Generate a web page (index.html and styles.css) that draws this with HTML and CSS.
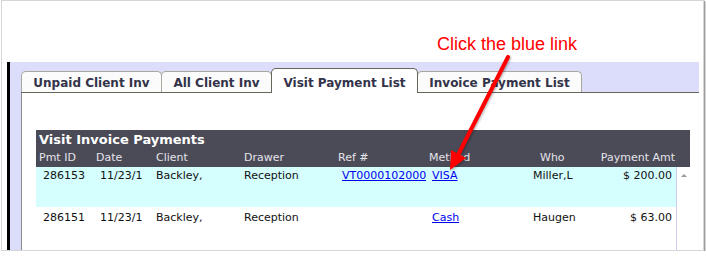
FILE: index.html
```html
<!DOCTYPE html>
<html lang="en">
<head>
  <meta charset="UTF-8">
  <title>Visit Payment List</title>
  <link rel="stylesheet" href="styles.css">
</head>
<body>

  <div class="shot">
    <div class="note">Click the blue link</div>

    <div class="app">
      <div class="gap"></div>
      <div class="bar"></div>
      <div class="panel">
        <div class="tabs">
          <div class="tab t1">Unpaid Client Inv</div>
          <div class="tab t2">All Client Inv</div>
          <div class="tab t3 active">Visit Payment List</div>
          <div class="tab t4">Invoice Payment List</div>
        </div>

        <div class="content">
          <div class="grid">
            <div class="head">
              <div class="title">Visit Invoice Payments</div>
              <div class="cols">
                <div>Pmt ID</div>
                <div>Date</div>
                <div>Client</div>
                <div>Drawer</div>
                <div>Ref #</div>
                <div>Method</div>
                <div class="who">Who</div>
                <div class="amt">Payment Amt</div>
                <div></div>
              </div>
            </div>

            <div class="row sel">
              <div class="c-id">286153</div>
              <div class="c-date">11/23/1</div>
              <div class="c-client">Backley,</div>
              <div class="c-drawer">Reception</div>
              <div class="c-ref"><a href="#">VT0000102000</a></div>
              <div class="c-method"><a href="#">VISA</a></div>
              <div class="c-who">Miller,L</div>
              <div class="c-amt">$ 200.00</div>
              <div class="scroll"><span class="up"></span></div>
            </div>

            <div class="row last">
              <div class="c-id">286151</div>
              <div class="c-date">11/23/1</div>
              <div class="c-client">Backley,</div>
              <div class="c-drawer">Reception</div>
              <div class="c-ref"></div>
              <div class="c-method"><a href="#">Cash</a></div>
              <div class="c-who">Haugen</div>
              <div class="c-amt">$ 63.00</div>
              <div class="scroll"></div>
            </div>
          </div>
        </div>
      </div>
    </div>

    <!-- annotation arrow, drawn over the page -->
    <svg class="arrow" width="706" height="258" viewBox="0 0 706 258">
      <line x1="508" y1="57" x2="458" y2="155" stroke="#f00" stroke-width="4" stroke-linecap="round"/>
      <polygon points="450,170 451,150 466,158" fill="#f00"/>
    </svg>
  </div>

</body>
</html>
```

FILE: styles.css
```css
body {
  margin: 0;
  padding-left: 1px;
  background-color: #fff;
}

.shot {
  position: relative;
  width: 701px;
  height: 249px;
  border: 1px solid #d6d6d6;
  box-shadow: 1px 1px 1px #9c9c9c, 2px 2px 2px #d4d4d4;
  background-color: #fff;
}

.note {
  height: 61px;
  box-sizing: border-box;
  padding: 33px 0 0 435px;
  font-family: "Liberation Sans", Arial, sans-serif;
  font-size: 18px;
  line-height: 20px;
  color: #f00;
}

.app {
  display: flex;
  height: 188px;
}

.gap {
  width: 5px;
}

.bar {
  width: 3px;
  background-color: #000;
}

.panel {
  width: 689px;
  display: flex;
  flex-direction: column;
  background-color: #dcdcfb;
  padding: 6px 0 0 11px;
  box-sizing: border-box;
  font-family: "DejaVu Sans", Verdana, sans-serif;
}

.tabs {
  display: flex;
  align-items: flex-end;
  height: 24px;
  border-bottom: 1px solid #66665a;
}

.tab {
  box-sizing: border-box;
  margin-right: -1px;
  padding-top: 2px;
  border: 1px solid #a8a89c;
  border-bottom: none;
  border-radius: 5px 5px 0 0;
  background-color: #fbfbfb;
  color: #33334a;
  font-size: 12px;
  font-weight: bold;
  line-height: 18px;
  text-align: center;
  white-space: nowrap;
}

.t1 { width: 141px; }
.t2 { width: 111px; }
.t3 { width: 147px; }
.t4 { width: 165px; }

.tab.active {
  position: relative;
  z-index: 1;
  padding-top: 5px;
  padding-bottom: 1px;
  margin-bottom: -1px;
  border-color: #66665a;
  background-color: #fff;
}

.content {
  flex: 1;
  background-color: #fff;
  border-left: 1px solid #8c8c8c;
  padding: 37px 9px 0 14px;
}

.grid {
  width: 654px;
  font-size: 11px;
  color: #111;
}

.head {
  background-color: #4b4a57;
}

.title {
  padding-left: 3px;
  font-size: 13px;
  font-weight: bold;
  line-height: 19px;
  color: #fff;
}

.cols,
.row {
  display: grid;
  grid-template-columns: 57px 60px 88px 94px 91px 84px 76px 90px 14px;
}

.cols {
  height: 18px;
  line-height: 18px;
  color: #e4e4ea;
}

.cols div {
  padding-left: 3px;
  white-space: nowrap;
}

.cols .who {
  padding-left: 30px;
}

.cols .amt {
  padding: 0 1px 0 0;
  text-align: right;
}

.row {
  height: 40px;
  line-height: 14px;
}

.row div {
  padding-top: 2px;
  white-space: nowrap;
}

.row.sel div {
  background-color: #d5fefe;
}

.row.last {
  height: 43px;
}

.row.last div {
  padding-top: 4px;
}

.row .c-id,
.row .c-date,
.row .c-ref { padding-left: 7px; }
.row .c-client,
.row .c-drawer { padding-left: 3px; }
.row .c-method { padding-left: 6px; }
.row .c-who { padding-left: 23px; }
.row .c-amt { padding-right: 4px; text-align: right; }

.row a {
  color: #0000ee;
}

.row.sel .scroll,
.row .scroll {
  background-color: #fff;
  border-left: 1px solid #cfcff2;
  padding: 7px 0 0 4px;
}

.up {
  display: block;
  width: 0;
  height: 0;
  border-left: 3px solid transparent;
  border-right: 3px solid transparent;
  border-bottom: 3px solid #9a9a9a;
}

.arrow {
  position: absolute;
  top: -1px;
  left: -2px;
  filter: drop-shadow(1px 1px 1px rgba(0, 0, 0, 0.3));
}
```
